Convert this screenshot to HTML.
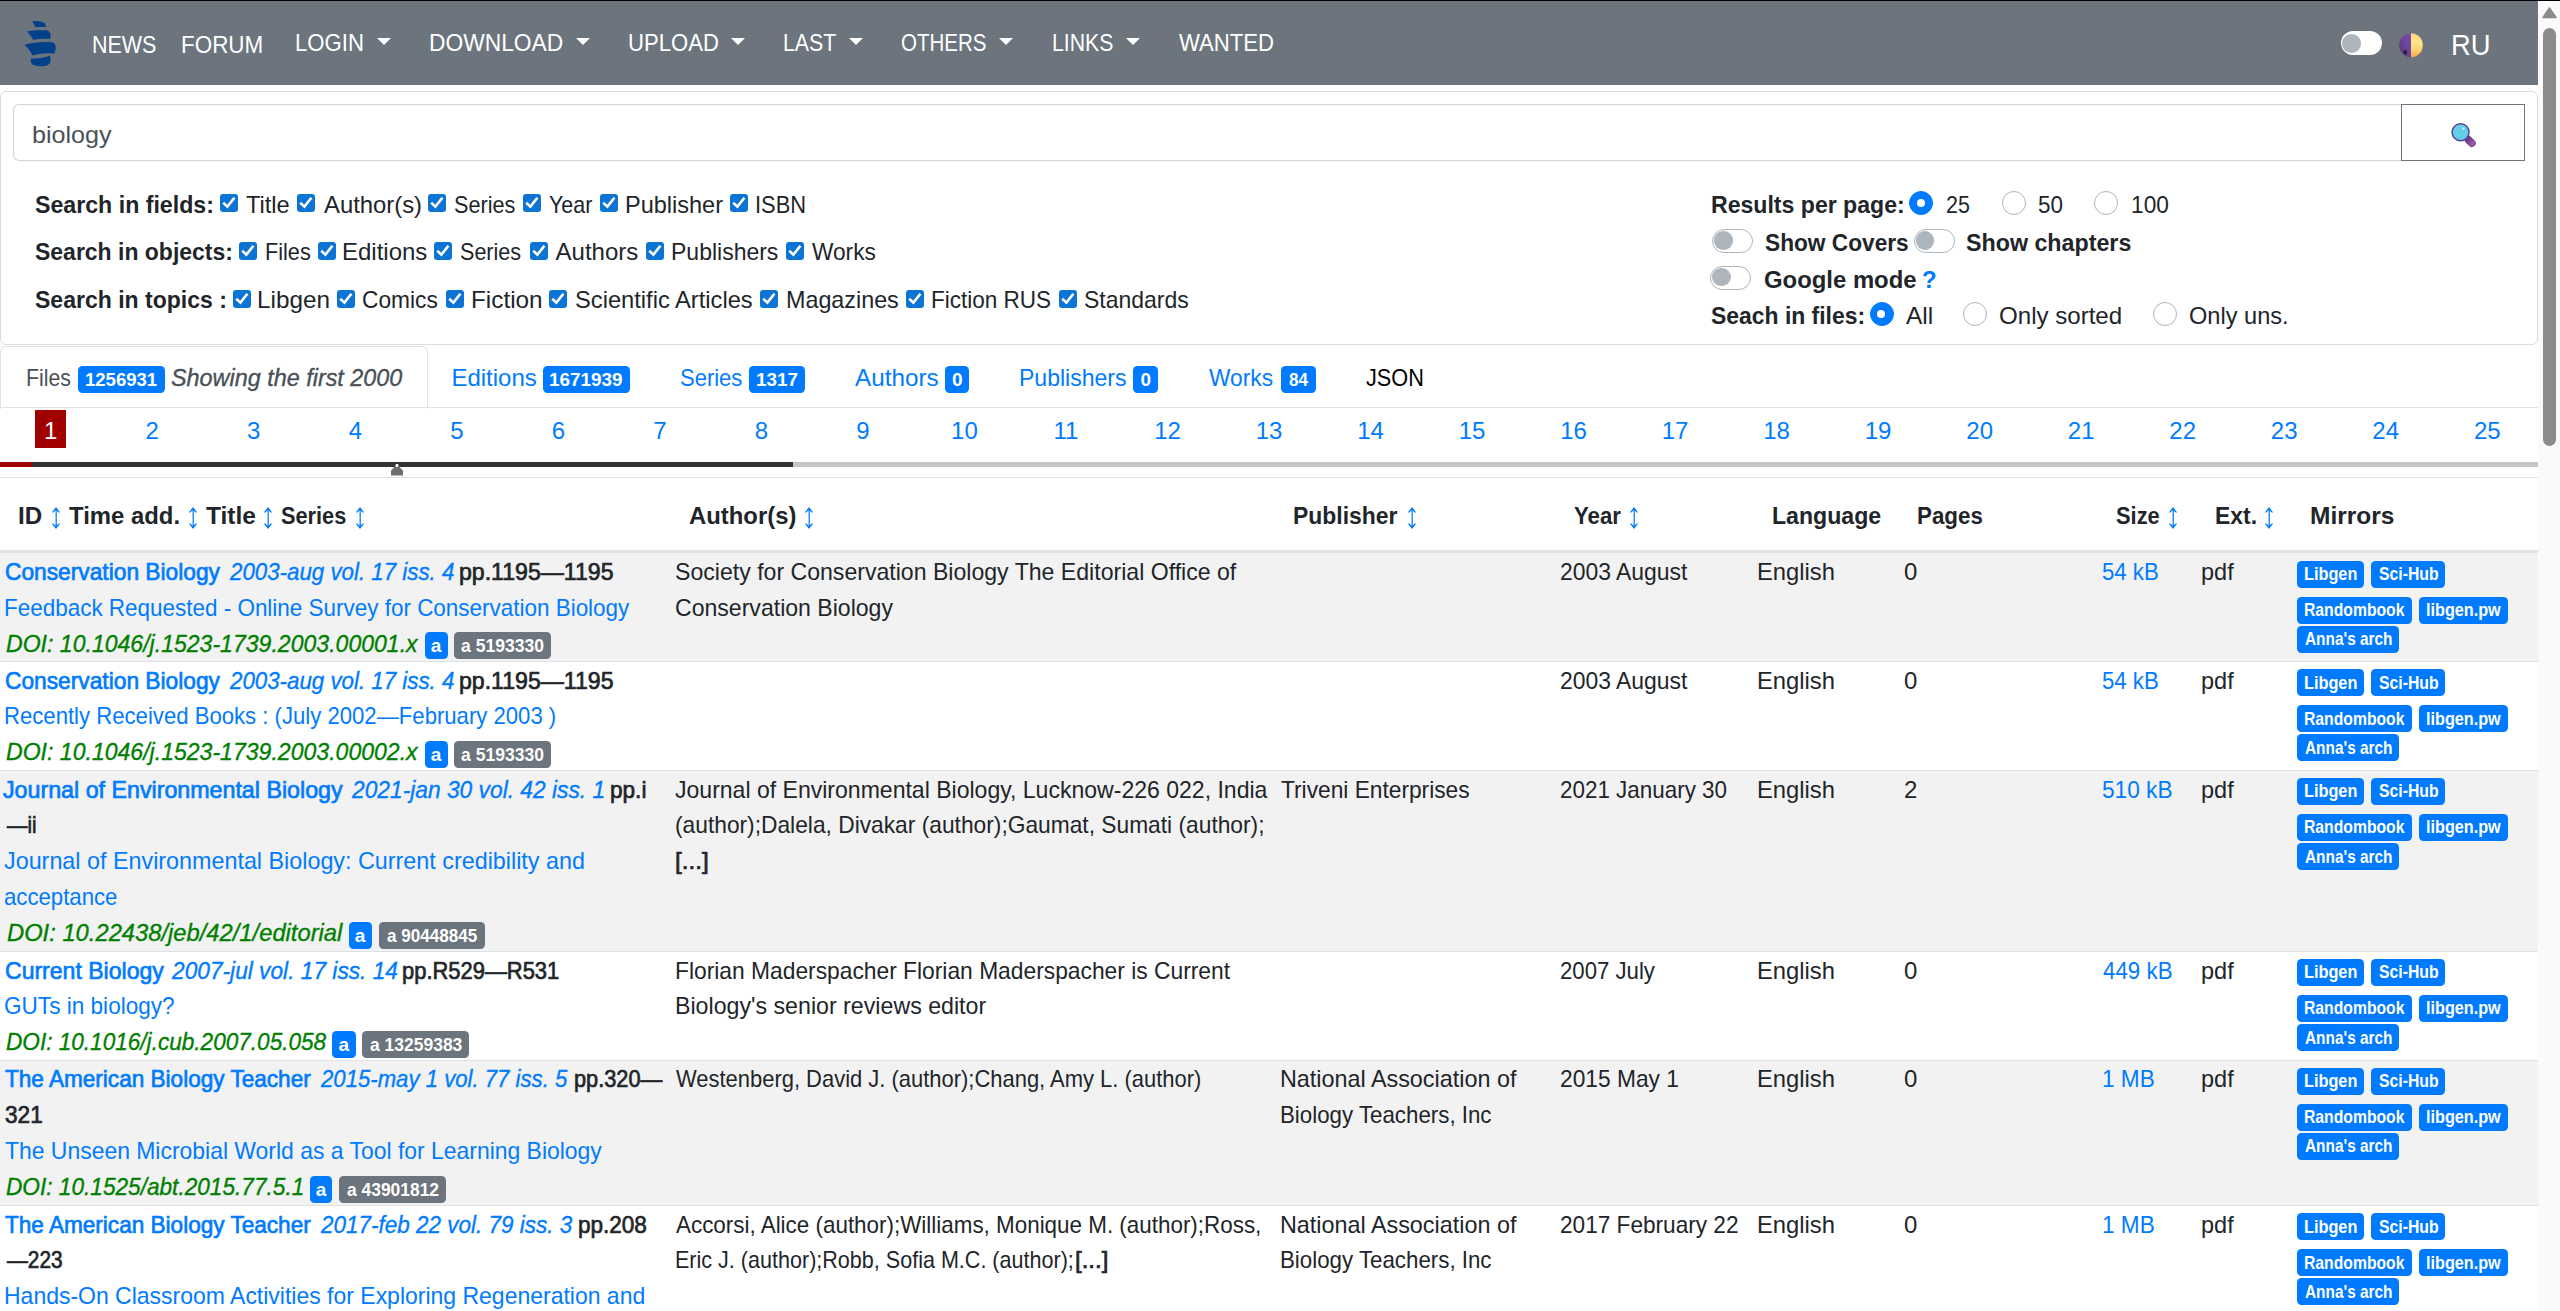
<!DOCTYPE html>
<html><head><meta charset="utf-8"><title>Library Genesis</title>
<style>
html,body{margin:0;padding:0;width:2560px;height:1311px;overflow:hidden;background:#fff;}
body{position:relative;font-family:"Liberation Sans",sans-serif;color:#212529;}
.t{position:absolute;white-space:pre;transform-origin:0 0;}
.bd{position:absolute;border-radius:4.5px;color:#fff;font-weight:bold;}
.bd span{position:absolute;white-space:pre;transform-origin:0 0;}
.cb{position:absolute;width:18px;height:18px;background:#0b74d5;border-radius:3px;}
.cb svg{position:absolute;left:0;top:0;}
.rd{position:absolute;width:24px;height:24px;box-sizing:border-box;border-radius:50%;border:1.5px solid #adb5bd;background:#fff;}
.rd.on{background:#007bff;border-color:#007bff;}
.rd.on::after{content:"";position:absolute;left:6.5px;top:6.5px;width:8px;height:8px;border-radius:50%;background:#fff;}
.sw{position:absolute;width:41.2px;height:23.5px;box-sizing:border-box;border:1.5px solid #adb5bd;border-radius:12px;background:#fff;}
.sw i{position:absolute;left:1.2px;top:1.3px;width:18.2px;height:18.2px;border-radius:50%;background:#adb5bd;}
.ar{position:absolute;}
.pg{position:absolute;top:419px;height:24px;font-size:24px;line-height:24px;text-align:center;}
.caret{position:absolute;top:37.5px;width:0;height:0;border-top:7.5px solid #fff;border-left:7px solid transparent;border-right:7px solid transparent;}
.row{position:absolute;left:0;width:2538px;}
.rline{position:absolute;left:0;width:2538px;height:1px;background:#dee2e6;}
</style></head><body>
<div style="position:absolute;left:0;top:0;width:2560px;height:1px;background:#000"></div>
<!-- navbar -->
<div style="position:absolute;left:0;top:1px;width:2538px;height:83.5px;background:#6c757d"></div>
<svg style="position:absolute;left:22px;top:18px" width="38" height="52" viewBox="22 18 38 52">
<g fill="#02408a">
<path d="M32.3 21.0 C37.5 20.8 42.5 21.6 44.6 23.0 C45.3 24.2 45.8 25.7 46.0 27.1 C42.3 26.9 38.5 26.9 35.2 27.3 C34.3 25.0 33.4 22.9 32.3 21.0Z"/>
<path d="M27.0 31.6 C33.5 30.1 41.0 29.9 47.5 30.6 C50.6 31.8 51.4 35.5 50.2 38.9 C44.5 38.6 38.6 38.9 33.1 39.8 C31.6 37.0 29.5 34.0 27.0 31.6Z"/>
<path d="M24.5 45.0 C32.5 42.3 43.0 41.7 52.7 42.3 C56.3 43.5 56.6 49.0 54.2 53.7 C47.5 52.8 40.0 53.3 32.6 55.6 C30.7 51.8 28.0 47.9 24.5 45.0Z"/>
<path d="M49.8 55.4 C51.4 59.5 50.8 63.7 47.0 65.5 C42.6 66.7 36.5 66.5 32.4 64.5 C30.5 62.6 30.5 60.2 31.2 58.5 C37.5 58.5 44.5 57.8 49.8 55.4Z"/>
</g></svg>
<!-- navbar toggle -->
<div style="position:absolute;left:2340.5px;top:31.3px;width:41px;height:23.6px;border-radius:12px;background:#fff"></div>
<div style="position:absolute;left:2342.4px;top:34px;width:18.6px;height:18.6px;border-radius:50%;background:#adb5bd"></div>
<!-- moon -->
<svg style="position:absolute;left:2399px;top:32.8px" width="25" height="25" viewBox="0 0 25 25">
<defs><linearGradient id="yl" x1="0" y1="0" x2="0" y2="1"><stop offset="0" stop-color="#ffd86e"/><stop offset="0.35" stop-color="#ffe58c"/><stop offset="0.7" stop-color="#fdd070"/><stop offset="1" stop-color="#f8a050"/></linearGradient>
<linearGradient id="pp" x1="1" y1="0" x2="0" y2="1"><stop offset="0" stop-color="#7a4cae"/><stop offset="0.5" stop-color="#6a4596"/><stop offset="1" stop-color="#4a3268"/></linearGradient></defs>
<path d="M12 0.2 A11.8 12 0 0 0 12 24.2Z" fill="url(#pp)"/>
<path d="M12 0.2 A11.8 12 0 0 1 12 24.2Z" fill="url(#yl)"/>
<ellipse cx="6.3" cy="19.3" rx="1.8" ry="2.2" fill="#2a1a3a"/>
</svg>
<!-- search card -->
<div style="position:absolute;left:0;top:91px;width:2537.5px;height:254px;box-sizing:border-box;border:1px solid #dcdcdc;border-radius:6px"></div>
<div style="position:absolute;left:13px;top:104px;width:2388.5px;height:56.5px;box-sizing:border-box;border:1.5px solid #ced4da;border-right:none;border-radius:6px 0 0 6px"></div>
<div style="position:absolute;left:2401px;top:104px;width:124px;height:56.5px;box-sizing:border-box;border:1.5px solid #6c757d"></div>
<svg style="position:absolute;left:2450px;top:122px" width="26" height="26" viewBox="0 0 26 26">
<defs><linearGradient id="hd" x1="0" y1="0" x2="1" y2="1"><stop offset="0" stop-color="#6e3c8c"/><stop offset="1" stop-color="#9a5aa6"/></linearGradient></defs>
<path d="M18.4 17.8 L21.9 21.2" stroke="#6a3a8a" stroke-width="7.6" stroke-linecap="round"/><path d="M18.4 17.8 L21.9 21.2" stroke="url(#hd)" stroke-width="6" stroke-linecap="round"/>
<circle cx="10.6" cy="10.2" r="8.5" fill="#62cfea" stroke="#5a3f8e" stroke-width="1.4"/>
<circle cx="13.4" cy="6.6" r="1.2" fill="#d8f2ff"/>
</svg>
<!-- tabs -->
<div style="position:absolute;left:0;top:346px;width:428px;height:62.5px;box-sizing:border-box;border:1.5px solid #dee2e6;border-bottom:none;border-radius:6px 6px 0 0;background:#fff"></div>
<div style="position:absolute;left:0;top:407px;width:2538px;height:1px;background:#dee2e6"></div>
<!-- pagination -->
<div style="position:absolute;left:35px;top:410px;width:31px;height:38px;background:#a00000"></div>
<div style="position:absolute;left:0;top:462px;width:32px;height:5px;background:#a00000"></div>
<div style="position:absolute;left:32px;top:462px;width:761px;height:5px;background:#333"></div>
<div style="position:absolute;left:793px;top:462px;width:1745px;height:5px;background:#c6c6c6"></div>
<svg style="position:absolute;left:390px;top:463px" width="14" height="13" viewBox="0 0 14 13"><path d="M1 12.5 V7.5 L7 1.5 L13 7.5 V12.5Z" fill="#6e6e6e"/><circle cx="7" cy="2.4" r="1.6" fill="#fff"/></svg>
<div style="position:absolute;left:0;top:477px;width:2538px;height:1.2px;background:#dee2e6"></div>
<!-- header border -->
<div style="position:absolute;left:0;top:550px;width:2538px;height:3px;background:#dee2e6"></div>
<div class="cb" style="left:220px;top:194px"><svg width="18" height="18" viewBox="0 0 18 18"><path d="M4.2 9.6 L7.4 12.6 L13.6 4.8" fill="none" stroke="#fff" stroke-width="2.6" stroke-linecap="square"/></svg></div><div class="cb" style="left:297px;top:194px"><svg width="18" height="18" viewBox="0 0 18 18"><path d="M4.2 9.6 L7.4 12.6 L13.6 4.8" fill="none" stroke="#fff" stroke-width="2.6" stroke-linecap="square"/></svg></div><div class="cb" style="left:428px;top:194px"><svg width="18" height="18" viewBox="0 0 18 18"><path d="M4.2 9.6 L7.4 12.6 L13.6 4.8" fill="none" stroke="#fff" stroke-width="2.6" stroke-linecap="square"/></svg></div><div class="cb" style="left:522.6px;top:194px"><svg width="18" height="18" viewBox="0 0 18 18"><path d="M4.2 9.6 L7.4 12.6 L13.6 4.8" fill="none" stroke="#fff" stroke-width="2.6" stroke-linecap="square"/></svg></div><div class="cb" style="left:600px;top:194px"><svg width="18" height="18" viewBox="0 0 18 18"><path d="M4.2 9.6 L7.4 12.6 L13.6 4.8" fill="none" stroke="#fff" stroke-width="2.6" stroke-linecap="square"/></svg></div><div class="cb" style="left:730px;top:194px"><svg width="18" height="18" viewBox="0 0 18 18"><path d="M4.2 9.6 L7.4 12.6 L13.6 4.8" fill="none" stroke="#fff" stroke-width="2.6" stroke-linecap="square"/></svg></div><div class="cb" style="left:239.2px;top:242px"><svg width="18" height="18" viewBox="0 0 18 18"><path d="M4.2 9.6 L7.4 12.6 L13.6 4.8" fill="none" stroke="#fff" stroke-width="2.6" stroke-linecap="square"/></svg></div><div class="cb" style="left:318px;top:242px"><svg width="18" height="18" viewBox="0 0 18 18"><path d="M4.2 9.6 L7.4 12.6 L13.6 4.8" fill="none" stroke="#fff" stroke-width="2.6" stroke-linecap="square"/></svg></div><div class="cb" style="left:434.2px;top:242px"><svg width="18" height="18" viewBox="0 0 18 18"><path d="M4.2 9.6 L7.4 12.6 L13.6 4.8" fill="none" stroke="#fff" stroke-width="2.6" stroke-linecap="square"/></svg></div><div class="cb" style="left:529.5px;top:242px"><svg width="18" height="18" viewBox="0 0 18 18"><path d="M4.2 9.6 L7.4 12.6 L13.6 4.8" fill="none" stroke="#fff" stroke-width="2.6" stroke-linecap="square"/></svg></div><div class="cb" style="left:645.6px;top:242px"><svg width="18" height="18" viewBox="0 0 18 18"><path d="M4.2 9.6 L7.4 12.6 L13.6 4.8" fill="none" stroke="#fff" stroke-width="2.6" stroke-linecap="square"/></svg></div><div class="cb" style="left:786px;top:242px"><svg width="18" height="18" viewBox="0 0 18 18"><path d="M4.2 9.6 L7.4 12.6 L13.6 4.8" fill="none" stroke="#fff" stroke-width="2.6" stroke-linecap="square"/></svg></div><div class="cb" style="left:233px;top:290px"><svg width="18" height="18" viewBox="0 0 18 18"><path d="M4.2 9.6 L7.4 12.6 L13.6 4.8" fill="none" stroke="#fff" stroke-width="2.6" stroke-linecap="square"/></svg></div><div class="cb" style="left:337.2px;top:290px"><svg width="18" height="18" viewBox="0 0 18 18"><path d="M4.2 9.6 L7.4 12.6 L13.6 4.8" fill="none" stroke="#fff" stroke-width="2.6" stroke-linecap="square"/></svg></div><div class="cb" style="left:446.2px;top:290px"><svg width="18" height="18" viewBox="0 0 18 18"><path d="M4.2 9.6 L7.4 12.6 L13.6 4.8" fill="none" stroke="#fff" stroke-width="2.6" stroke-linecap="square"/></svg></div><div class="cb" style="left:549.3px;top:290px"><svg width="18" height="18" viewBox="0 0 18 18"><path d="M4.2 9.6 L7.4 12.6 L13.6 4.8" fill="none" stroke="#fff" stroke-width="2.6" stroke-linecap="square"/></svg></div><div class="cb" style="left:760.1px;top:290px"><svg width="18" height="18" viewBox="0 0 18 18"><path d="M4.2 9.6 L7.4 12.6 L13.6 4.8" fill="none" stroke="#fff" stroke-width="2.6" stroke-linecap="square"/></svg></div><div class="cb" style="left:906.1px;top:290px"><svg width="18" height="18" viewBox="0 0 18 18"><path d="M4.2 9.6 L7.4 12.6 L13.6 4.8" fill="none" stroke="#fff" stroke-width="2.6" stroke-linecap="square"/></svg></div><div class="cb" style="left:1059px;top:290px"><svg width="18" height="18" viewBox="0 0 18 18"><path d="M4.2 9.6 L7.4 12.6 L13.6 4.8" fill="none" stroke="#fff" stroke-width="2.6" stroke-linecap="square"/></svg></div><div class="rd on" style="left:1909px;top:191px"></div><div class="rd" style="left:2001.8px;top:191px"></div><div class="rd" style="left:2093.8px;top:191px"></div><div class="rd on" style="left:1869.8px;top:302px"></div><div class="rd" style="left:1963px;top:302px"></div><div class="rd" style="left:2152.9px;top:302px"></div><div class="sw" style="left:1712.3px;top:229.2px"><i></i></div><div class="sw" style="left:1913.5px;top:229.2px"><i></i></div><div class="sw" style="left:1710.3px;top:266px"><i></i></div><svg class="ar" style="left:51.3px;top:506px" width="10" height="24" viewBox="0 0 10 24"><path d="M5.2 2 V22" stroke="#007bff" stroke-width="1.25"/><path d="M1 6.2 L5 1 L9 6.2 L8 6.8 L5 4 L2 6.8Z M1 17.8 L5 23 L9 17.8 L8 17.2 L5 20 L2 17.2Z" fill="#007bff"/></svg><svg class="ar" style="left:187.8px;top:506px" width="10" height="24" viewBox="0 0 10 24"><path d="M5.2 2 V22" stroke="#007bff" stroke-width="1.25"/><path d="M1 6.2 L5 1 L9 6.2 L8 6.8 L5 4 L2 6.8Z M1 17.8 L5 23 L9 17.8 L8 17.2 L5 20 L2 17.2Z" fill="#007bff"/></svg><svg class="ar" style="left:263px;top:506px" width="10" height="24" viewBox="0 0 10 24"><path d="M5.2 2 V22" stroke="#007bff" stroke-width="1.25"/><path d="M1 6.2 L5 1 L9 6.2 L8 6.8 L5 4 L2 6.8Z M1 17.8 L5 23 L9 17.8 L8 17.2 L5 20 L2 17.2Z" fill="#007bff"/></svg><svg class="ar" style="left:355px;top:506px" width="10" height="24" viewBox="0 0 10 24"><path d="M5.2 2 V22" stroke="#007bff" stroke-width="1.25"/><path d="M1 6.2 L5 1 L9 6.2 L8 6.8 L5 4 L2 6.8Z M1 17.8 L5 23 L9 17.8 L8 17.2 L5 20 L2 17.2Z" fill="#007bff"/></svg><svg class="ar" style="left:804.2px;top:506px" width="10" height="24" viewBox="0 0 10 24"><path d="M5.2 2 V22" stroke="#007bff" stroke-width="1.25"/><path d="M1 6.2 L5 1 L9 6.2 L8 6.8 L5 4 L2 6.8Z M1 17.8 L5 23 L9 17.8 L8 17.2 L5 20 L2 17.2Z" fill="#007bff"/></svg><svg class="ar" style="left:1406.5px;top:506px" width="10" height="24" viewBox="0 0 10 24"><path d="M5.2 2 V22" stroke="#007bff" stroke-width="1.25"/><path d="M1 6.2 L5 1 L9 6.2 L8 6.8 L5 4 L2 6.8Z M1 17.8 L5 23 L9 17.8 L8 17.2 L5 20 L2 17.2Z" fill="#007bff"/></svg><svg class="ar" style="left:1629.2px;top:506px" width="10" height="24" viewBox="0 0 10 24"><path d="M5.2 2 V22" stroke="#007bff" stroke-width="1.25"/><path d="M1 6.2 L5 1 L9 6.2 L8 6.8 L5 4 L2 6.8Z M1 17.8 L5 23 L9 17.8 L8 17.2 L5 20 L2 17.2Z" fill="#007bff"/></svg><svg class="ar" style="left:2167.5px;top:506px" width="10" height="24" viewBox="0 0 10 24"><path d="M5.2 2 V22" stroke="#007bff" stroke-width="1.25"/><path d="M1 6.2 L5 1 L9 6.2 L8 6.8 L5 4 L2 6.8Z M1 17.8 L5 23 L9 17.8 L8 17.2 L5 20 L2 17.2Z" fill="#007bff"/></svg><svg class="ar" style="left:2264px;top:506px" width="10" height="24" viewBox="0 0 10 24"><path d="M5.2 2 V22" stroke="#007bff" stroke-width="1.25"/><path d="M1 6.2 L5 1 L9 6.2 L8 6.8 L5 4 L2 6.8Z M1 17.8 L5 23 L9 17.8 L8 17.2 L5 20 L2 17.2Z" fill="#007bff"/></svg><div class="pg" style="left:0.00px;width:101.52px;color:#fff">1</div><div class="pg" style="left:101.52px;width:101.52px;color:#007bff">2</div><div class="pg" style="left:203.04px;width:101.52px;color:#007bff">3</div><div class="pg" style="left:304.56px;width:101.52px;color:#007bff">4</div><div class="pg" style="left:406.08px;width:101.52px;color:#007bff">5</div><div class="pg" style="left:507.60px;width:101.52px;color:#007bff">6</div><div class="pg" style="left:609.12px;width:101.52px;color:#007bff">7</div><div class="pg" style="left:710.64px;width:101.52px;color:#007bff">8</div><div class="pg" style="left:812.16px;width:101.52px;color:#007bff">9</div><div class="pg" style="left:913.68px;width:101.52px;color:#007bff">10</div><div class="pg" style="left:1015.20px;width:101.52px;color:#007bff">11</div><div class="pg" style="left:1116.72px;width:101.52px;color:#007bff">12</div><div class="pg" style="left:1218.24px;width:101.52px;color:#007bff">13</div><div class="pg" style="left:1319.76px;width:101.52px;color:#007bff">14</div><div class="pg" style="left:1421.28px;width:101.52px;color:#007bff">15</div><div class="pg" style="left:1522.80px;width:101.52px;color:#007bff">16</div><div class="pg" style="left:1624.32px;width:101.52px;color:#007bff">17</div><div class="pg" style="left:1725.84px;width:101.52px;color:#007bff">18</div><div class="pg" style="left:1827.36px;width:101.52px;color:#007bff">19</div><div class="pg" style="left:1928.88px;width:101.52px;color:#007bff">20</div><div class="pg" style="left:2030.40px;width:101.52px;color:#007bff">21</div><div class="pg" style="left:2131.92px;width:101.52px;color:#007bff">22</div><div class="pg" style="left:2233.44px;width:101.52px;color:#007bff">23</div><div class="pg" style="left:2334.96px;width:101.52px;color:#007bff">24</div><div class="pg" style="left:2436.48px;width:101.52px;color:#007bff">25</div><div class="caret" style="left:377px"></div><div class="caret" style="left:576.4px"></div><div class="caret" style="left:731px"></div><div class="caret" style="left:849px"></div><div class="caret" style="left:999px"></div><div class="caret" style="left:1126px"></div><div class="row" style="top:553px;height:108.5px;background:#f2f2f2"></div><div class="row" style="top:661.5px;height:108.79999999999995px;background:#fff"></div><div class="rline" style="top:661px"></div><div class="row" style="top:770.3px;height:181.10000000000002px;background:#f2f2f2"></div><div class="rline" style="top:770px"></div><div class="row" style="top:951.4px;height:108.80000000000007px;background:#fff"></div><div class="rline" style="top:951px"></div><div class="row" style="top:1060.2px;height:145.29999999999995px;background:#f2f2f2"></div><div class="rline" style="top:1060px"></div><div class="row" style="top:1205.5px;height:105.5px;background:#fff"></div><div class="rline" style="top:1205px"></div>
<div class="t" style="left:92.41px;top:33px;font-size:24px;line-height:24px;color:#ffffff;transform:scaleX(0.8945)">NEWS</div>
<div class="t" style="left:181.37px;top:33px;font-size:24px;line-height:24px;color:#ffffff;transform:scaleX(0.9350)">FORUM</div>
<div class="t" style="left:294.68px;top:31px;font-size:24px;line-height:24px;color:#ffffff;transform:scaleX(0.9233)">LOGIN</div>
<div class="t" style="left:428.75px;top:31px;font-size:24px;line-height:24px;color:#ffffff;transform:scaleX(0.9499)">DOWNLOAD</div>
<div class="t" style="left:628.28px;top:31px;font-size:24px;line-height:24px;color:#ffffff;transform:scaleX(0.9203)">UPLOAD</div>
<div class="t" style="left:783.01px;top:31px;font-size:24px;line-height:24px;color:#ffffff;transform:scaleX(0.8863)">LAST</div>
<div class="t" style="left:900.74px;top:31px;font-size:24px;line-height:24px;color:#ffffff;transform:scaleX(0.8551)">OTHERS</div>
<div class="t" style="left:1051.92px;top:31px;font-size:24px;line-height:24px;color:#ffffff;transform:scaleX(0.8849)">LINKS</div>
<div class="t" style="left:1179.40px;top:31px;font-size:24px;line-height:24px;color:#ffffff;transform:scaleX(0.9225)">WANTED</div>
<div class="t" style="left:2451.17px;top:30px;font-size:30px;line-height:30px;color:#ffffff;transform:scaleX(0.9129)">RU</div>
<div class="t" style="left:31.75px;top:123px;font-size:24px;line-height:24px;color:#495057;transform:scaleX(1.0472)">biology</div>
<div class="t" style="left:34.99px;top:193px;font-size:24px;line-height:24px;color:#212529;font-weight:bold;transform:scaleX(0.9651)">Search in fields:</div>
<div class="t" style="left:246.30px;top:193px;font-size:24px;line-height:24px;color:#212529;transform:scaleX(0.9844)">Title</div>
<div class="t" style="left:323.80px;top:193px;font-size:24px;line-height:24px;color:#212529;transform:scaleX(0.9928)">Author(s)</div>
<div class="t" style="left:453.60px;top:193px;font-size:24px;line-height:24px;color:#212529;transform:scaleX(0.9012)">Series</div>
<div class="t" style="left:548.50px;top:193px;font-size:24px;line-height:24px;color:#212529;transform:scaleX(0.8949)">Year</div>
<div class="t" style="left:624.51px;top:193px;font-size:24px;line-height:24px;color:#212529;transform:scaleX(0.9793)">Publisher</div>
<div class="t" style="left:754.98px;top:193px;font-size:24px;line-height:24px;color:#212529;transform:scaleX(0.9112)">ISBN</div>
<div class="t" style="left:34.99px;top:240px;font-size:24px;line-height:24px;color:#212529;font-weight:bold;transform:scaleX(0.9573)">Search in objects:</div>
<div class="t" style="left:264.50px;top:240px;font-size:24px;line-height:24px;color:#212529;transform:scaleX(0.9019)">Files</div>
<div class="t" style="left:341.98px;top:240px;font-size:24px;line-height:24px;color:#212529">Editions</div>
<div class="t" style="left:460.00px;top:240px;font-size:24px;line-height:24px;color:#212529;transform:scaleX(0.8981)">Series</div>
<div class="t" style="left:555.60px;top:240px;font-size:24px;line-height:24px;color:#212529">Authors</div>
<div class="t" style="left:670.74px;top:240px;font-size:24px;line-height:24px;color:#212529;transform:scaleX(0.9581)">Publishers</div>
<div class="t" style="left:812.20px;top:240px;font-size:24px;line-height:24px;color:#212529;transform:scaleX(0.9444)">Works</div>
<div class="t" style="left:34.99px;top:288px;font-size:24px;line-height:24px;color:#212529;font-weight:bold;transform:scaleX(0.9593)">Search in topics :</div>
<div class="t" style="left:257.47px;top:288px;font-size:24px;line-height:24px;color:#212529;transform:scaleX(1.0129)">Libgen</div>
<div class="t" style="left:362.15px;top:288px;font-size:24px;line-height:24px;color:#212529;transform:scaleX(0.9468)">Comics</div>
<div class="t" style="left:470.77px;top:288px;font-size:24px;line-height:24px;color:#212529;transform:scaleX(1.0129)">Fiction</div>
<div class="t" style="left:574.71px;top:288px;font-size:24px;line-height:24px;color:#212529;transform:scaleX(0.9869)">Scientific Articles</div>
<div class="t" style="left:785.83px;top:288px;font-size:24px;line-height:24px;color:#212529;transform:scaleX(0.9717)">Magazines</div>
<div class="t" style="left:931.06px;top:288px;font-size:24px;line-height:24px;color:#212529;transform:scaleX(0.9380)">Fiction RUS</div>
<div class="t" style="left:1084.14px;top:288px;font-size:24px;line-height:24px;color:#212529;transform:scaleX(0.9575)">Standards</div>
<div class="t" style="left:1710.64px;top:193px;font-size:24px;line-height:24px;color:#212529;font-weight:bold;transform:scaleX(0.9617)">Results per page:</div>
<div class="t" style="left:1945.61px;top:193px;font-size:24px;line-height:24px;color:#212529;transform:scaleX(0.8917)">25</div>
<div class="t" style="left:2037.97px;top:193px;font-size:24px;line-height:24px;color:#212529;transform:scaleX(0.9347)">50</div>
<div class="t" style="left:2130.95px;top:193px;font-size:24px;line-height:24px;color:#212529;transform:scaleX(0.9459)">100</div>
<div class="t" style="left:1765.20px;top:231px;font-size:24px;line-height:24px;color:#212529;font-weight:bold;transform:scaleX(0.9454)">Show Covers</div>
<div class="t" style="left:1966.29px;top:231px;font-size:24px;line-height:24px;color:#212529;font-weight:bold;transform:scaleX(0.9686)">Show chapters</div>
<div class="t" style="left:1763.89px;top:268px;font-size:24px;line-height:24px;color:#212529;font-weight:bold;transform:scaleX(0.9949)">Google mode</div>
<div class="t" style="left:1922.00px;top:268px;font-size:24px;line-height:24px;color:#007bff;font-weight:bold">?</div>
<div class="t" style="left:1710.59px;top:304px;font-size:24px;line-height:24px;color:#212529;font-weight:bold;transform:scaleX(0.9549)">Seach in files:</div>
<div class="t" style="left:1905.80px;top:304px;font-size:24px;line-height:24px;color:#212529;transform:scaleX(1.0182)">All</div>
<div class="t" style="left:1999.30px;top:304px;font-size:24px;line-height:24px;color:#212529;transform:scaleX(1.0036)">Only sorted</div>
<div class="t" style="left:2188.72px;top:304px;font-size:24px;line-height:24px;color:#212529;transform:scaleX(0.9827)">Only uns.</div>
<div class="t" style="left:25.61px;top:366px;font-size:24px;line-height:24px;color:#495057;transform:scaleX(0.8858)">Files</div>
<div class="t" style="left:171.00px;top:366px;font-size:24px;line-height:24px;color:#495057;font-style:italic;-webkit-text-stroke:0.35px #495057;transform:scaleX(0.9743)">Showing the first 2000</div>
<div class="t" style="left:451.38px;top:366px;font-size:24px;line-height:24px;color:#007bff">Editions</div>
<div class="t" style="left:679.68px;top:366px;font-size:24px;line-height:24px;color:#007bff;transform:scaleX(0.9162)">Series</div>
<div class="t" style="left:854.70px;top:366px;font-size:24px;line-height:24px;color:#007bff;transform:scaleX(1.0108)">Authors</div>
<div class="t" style="left:1019.34px;top:366px;font-size:24px;line-height:24px;color:#007bff;transform:scaleX(0.9599)">Publishers</div>
<div class="t" style="left:1209.40px;top:366px;font-size:24px;line-height:24px;color:#007bff;transform:scaleX(0.9473)">Works</div>
<div class="t" style="left:1365.60px;top:366px;font-size:24px;line-height:24px;color:#000000;transform:scaleX(0.9031)">JSON</div>
<div class="t" style="left:18.29px;top:504px;font-size:24px;line-height:24px;color:#212529;font-weight:bold;transform:scaleX(1.0058)">ID</div>
<div class="t" style="left:68.60px;top:504px;font-size:24px;line-height:24px;color:#212529;font-weight:bold;transform:scaleX(0.9953)">Time add.</div>
<div class="t" style="left:205.70px;top:504px;font-size:24px;line-height:24px;color:#212529;font-weight:bold;transform:scaleX(1.0216)">Title</div>
<div class="t" style="left:281.30px;top:504px;font-size:24px;line-height:24px;color:#212529;font-weight:bold;transform:scaleX(0.9064)">Series</div>
<div class="t" style="left:689.20px;top:504px;font-size:24px;line-height:24px;color:#212529;font-weight:bold;transform:scaleX(0.9945)">Author(s)</div>
<div class="t" style="left:1293.14px;top:504px;font-size:24px;line-height:24px;color:#212529;font-weight:bold;transform:scaleX(0.9555)">Publisher</div>
<div class="t" style="left:1574.20px;top:504px;font-size:24px;line-height:24px;color:#212529;font-weight:bold;transform:scaleX(0.9250)">Year</div>
<div class="t" style="left:1771.84px;top:504px;font-size:24px;line-height:24px;color:#212529;font-weight:bold;transform:scaleX(0.9625)">Language</div>
<div class="t" style="left:1917.47px;top:504px;font-size:24px;line-height:24px;color:#212529;font-weight:bold;transform:scaleX(0.9313)">Pages</div>
<div class="t" style="left:2115.50px;top:504px;font-size:24px;line-height:24px;color:#212529;font-weight:bold;transform:scaleX(0.9103)">Size</div>
<div class="t" style="left:2214.55px;top:504px;font-size:24px;line-height:24px;color:#212529;font-weight:bold;transform:scaleX(0.9543)">Ext.</div>
<div class="t" style="left:2310.48px;top:504px;font-size:24px;line-height:24px;color:#212529;font-weight:bold;transform:scaleX(1.0204)">Mirrors</div>
<div class="t" style="left:5.35px;top:560px;font-size:24px;line-height:24px;color:#007bff;-webkit-text-stroke:0.7px #007bff;transform:scaleX(0.9478)">Conservation Biology</div>
<div class="t" style="left:229.53px;top:560px;font-size:24px;line-height:24px;color:#007bff;font-style:italic;-webkit-text-stroke:0.35px #007bff;transform:scaleX(0.9292)">2003-aug vol. 17 iss. 4</div>
<div class="t" style="left:459.04px;top:560px;font-size:24px;line-height:24px;color:#212529;-webkit-text-stroke:0.7px #212529;transform:scaleX(0.9621)">pp.1195—1195</div>
<div class="t" style="left:4.36px;top:596px;font-size:24px;line-height:24px;color:#007bff;transform:scaleX(0.9356)">Feedback Requested - Online Survey for Conservation Biology</div>
<div class="t" style="left:6.30px;top:632px;font-size:24px;line-height:24px;color:#008000;font-style:italic;-webkit-text-stroke:0.35px #008000;transform:scaleX(0.9610)">DOI: 10.1046/j.1523-1739.2003.00001.x</div>
<div class="t" style="left:675.04px;top:560px;font-size:24px;line-height:24px;color:#212529;transform:scaleX(0.9620)">Society for Conservation Biology The Editorial Office of</div>
<div class="t" style="left:675.04px;top:596px;font-size:24px;line-height:24px;color:#212529;transform:scaleX(0.9611)">Conservation Biology</div>
<div class="t" style="left:5.35px;top:669px;font-size:24px;line-height:24px;color:#007bff;-webkit-text-stroke:0.7px #007bff;transform:scaleX(0.9478)">Conservation Biology</div>
<div class="t" style="left:229.53px;top:669px;font-size:24px;line-height:24px;color:#007bff;font-style:italic;-webkit-text-stroke:0.35px #007bff;transform:scaleX(0.9292)">2003-aug vol. 17 iss. 4</div>
<div class="t" style="left:459.04px;top:669px;font-size:24px;line-height:24px;color:#212529;-webkit-text-stroke:0.7px #212529;transform:scaleX(0.9621)">pp.1195—1195</div>
<div class="t" style="left:4.38px;top:704px;font-size:24px;line-height:24px;color:#007bff;transform:scaleX(0.9220)">Recently Received Books : (July 2002—February 2003 )</div>
<div class="t" style="left:6.30px;top:740px;font-size:24px;line-height:24px;color:#008000;font-style:italic;-webkit-text-stroke:0.35px #008000;transform:scaleX(0.9610)">DOI: 10.1046/j.1523-1739.2003.00002.x</div>
<div class="t" style="left:3.20px;top:778px;font-size:24px;line-height:24px;color:#007bff;-webkit-text-stroke:0.7px #007bff;transform:scaleX(0.9679)">Journal of Environmental Biology</div>
<div class="t" style="left:351.55px;top:778px;font-size:24px;line-height:24px;color:#007bff;font-style:italic;-webkit-text-stroke:0.35px #007bff;transform:scaleX(0.9486)">2021-jan 30 vol. 42 iss. 1</div>
<div class="t" style="left:609.96px;top:778px;font-size:24px;line-height:24px;color:#212529;-webkit-text-stroke:0.7px #212529;transform:scaleX(0.9411)">pp.i</div>
<div class="t" style="left:6.74px;top:813px;font-size:24px;line-height:24px;color:#212529;-webkit-text-stroke:0.7px #212529;transform:scaleX(0.8494)">—ii</div>
<div class="t" style="left:4.00px;top:849px;font-size:24px;line-height:24px;color:#007bff;transform:scaleX(0.9720)">Journal of Environmental Biology: Current credibility and</div>
<div class="t" style="left:4.38px;top:885px;font-size:24px;line-height:24px;color:#007bff;transform:scaleX(0.9242)">acceptance</div>
<div class="t" style="left:6.60px;top:921px;font-size:24px;line-height:24px;color:#008000;font-style:italic;-webkit-text-stroke:0.35px #008000;transform:scaleX(0.9895)">DOI: 10.22438/jeb/42/1/editorial</div>
<div class="t" style="left:675.00px;top:778px;font-size:24px;line-height:24px;color:#212529;transform:scaleX(0.9597)">Journal of Environmental Biology, Lucknow-226 022, India</div>
<div class="t" style="left:675.05px;top:813px;font-size:24px;line-height:24px;color:#212529;transform:scaleX(0.9484)">(author);Dalela, Divakar (author);Gaumat, Sumati (author);</div>
<div class="t" style="left:674.99px;top:849px;font-size:24px;line-height:24px;color:#212529;-webkit-text-stroke:0.7px #212529;transform:scaleX(1.0117)">[...]</div>
<div class="t" style="left:1281.00px;top:778px;font-size:24px;line-height:24px;color:#212529;transform:scaleX(0.9469)">Triveni Enterprises</div>
<div class="t" style="left:5.33px;top:959px;font-size:24px;line-height:24px;color:#007bff;-webkit-text-stroke:0.7px #007bff;transform:scaleX(0.9599)">Current Biology</div>
<div class="t" style="left:172.25px;top:959px;font-size:24px;line-height:24px;color:#007bff;font-style:italic;-webkit-text-stroke:0.35px #007bff;transform:scaleX(0.9463)">2007-jul vol. 17 iss. 14</div>
<div class="t" style="left:402.09px;top:959px;font-size:24px;line-height:24px;color:#212529;-webkit-text-stroke:0.7px #212529;transform:scaleX(0.9135)">pp.R529—R531</div>
<div class="t" style="left:4.36px;top:994px;font-size:24px;line-height:24px;color:#007bff;transform:scaleX(0.9407)">GUTs in biology?</div>
<div class="t" style="left:5.80px;top:1030px;font-size:24px;line-height:24px;color:#008000;font-style:italic;-webkit-text-stroke:0.35px #008000;transform:scaleX(0.9410)">DOI: 10.1016/j.cub.2007.05.058</div>
<div class="t" style="left:675.05px;top:959px;font-size:24px;line-height:24px;color:#212529;transform:scaleX(0.9500)">Florian Maderspacher Florian Maderspacher is Current</div>
<div class="t" style="left:675.03px;top:994px;font-size:24px;line-height:24px;color:#212529;transform:scaleX(0.9662)">Biology&#x27;s senior reviews editor</div>
<div class="t" style="left:5.30px;top:1067px;font-size:24px;line-height:24px;color:#007bff;-webkit-text-stroke:0.7px #007bff;transform:scaleX(0.9405)">The American Biology Teacher</div>
<div class="t" style="left:320.92px;top:1067px;font-size:24px;line-height:24px;color:#007bff;font-style:italic;-webkit-text-stroke:0.35px #007bff;transform:scaleX(0.9231)">2015-may 1 vol. 77 iss. 5</div>
<div class="t" style="left:574.09px;top:1067px;font-size:24px;line-height:24px;color:#212529;-webkit-text-stroke:0.7px #212529;transform:scaleX(0.9066)">pp.320—</div>
<div class="t" style="left:5.30px;top:1103px;font-size:24px;line-height:24px;color:#212529;-webkit-text-stroke:0.7px #212529;transform:scaleX(0.9422)">321</div>
<div class="t" style="left:5.30px;top:1139px;font-size:24px;line-height:24px;color:#007bff;transform:scaleX(0.9552)">The Unseen Microbial World as a Tool for Learning Biology</div>
<div class="t" style="left:5.80px;top:1175px;font-size:24px;line-height:24px;color:#008000;font-style:italic;-webkit-text-stroke:0.35px #008000;transform:scaleX(0.9432)">DOI: 10.1525/abt.2015.77.5.1</div>
<div class="t" style="left:676.30px;top:1067px;font-size:24px;line-height:24px;color:#212529;transform:scaleX(0.9144)">Westenberg, David J. (author);Chang, Amy L. (author)</div>
<div class="t" style="left:1280.03px;top:1067px;font-size:24px;line-height:24px;color:#212529;transform:scaleX(0.9735)">National Association of</div>
<div class="t" style="left:1280.07px;top:1103px;font-size:24px;line-height:24px;color:#212529;transform:scaleX(0.9290)">Biology Teachers, Inc</div>
<div class="t" style="left:5.30px;top:1213px;font-size:24px;line-height:24px;color:#007bff;-webkit-text-stroke:0.7px #007bff;transform:scaleX(0.9405)">The American Biology Teacher</div>
<div class="t" style="left:320.94px;top:1213px;font-size:24px;line-height:24px;color:#007bff;font-style:italic;-webkit-text-stroke:0.35px #007bff;transform:scaleX(0.9369)">2017-feb 22 vol. 79 iss. 3</div>
<div class="t" style="left:578.06px;top:1213px;font-size:24px;line-height:24px;color:#212529;-webkit-text-stroke:0.7px #212529;transform:scaleX(0.9382)">pp.208</div>
<div class="t" style="left:6.78px;top:1248px;font-size:24px;line-height:24px;color:#212529;-webkit-text-stroke:0.7px #212529;transform:scaleX(0.8672)">—223</div>
<div class="t" style="left:4.34px;top:1284px;font-size:24px;line-height:24px;color:#007bff;transform:scaleX(0.9575)">Hands-On Classroom Activities for Exploring Regeneration and</div>
<div class="t" style="left:676.30px;top:1213px;font-size:24px;line-height:24px;color:#212529;transform:scaleX(0.9338)">Accorsi, Alice (author);Williams, Monique M. (author);Ross,</div>
<div class="t" style="left:675.40px;top:1248px;font-size:24px;line-height:24px;color:#212529;transform:scaleX(0.8979)">Eric J. (author);Robb, Sofia M.C. (author);</div>
<div class="t" style="left:1075.00px;top:1248px;font-size:24px;line-height:24px;color:#212529;-webkit-text-stroke:0.7px #212529">[...]</div>
<div class="t" style="left:1280.03px;top:1213px;font-size:24px;line-height:24px;color:#212529;transform:scaleX(0.9735)">National Association of</div>
<div class="t" style="left:1280.07px;top:1248px;font-size:24px;line-height:24px;color:#212529;transform:scaleX(0.9290)">Biology Teachers, Inc</div>
<div class="t" style="left:1560.35px;top:560px;font-size:24px;line-height:24px;color:#212529;transform:scaleX(0.9545)">2003 August</div>
<div class="t" style="left:1756.89px;top:560px;font-size:24px;line-height:24px;color:#212529;transform:scaleX(0.9903)">English</div>
<div class="t" style="left:1903.90px;top:560px;font-size:24px;line-height:24px;color:#212529">0</div>
<div class="t" style="left:2101.79px;top:560px;font-size:24px;line-height:24px;color:#007bff;transform:scaleX(0.9245)">54 kB</div>
<div class="t" style="left:2200.92px;top:560px;font-size:24px;line-height:24px;color:#212529;transform:scaleX(0.9790)">pdf</div>
<div class="t" style="left:1560.35px;top:669px;font-size:24px;line-height:24px;color:#212529;transform:scaleX(0.9545)">2003 August</div>
<div class="t" style="left:1756.89px;top:669px;font-size:24px;line-height:24px;color:#212529;transform:scaleX(0.9903)">English</div>
<div class="t" style="left:1903.90px;top:669px;font-size:24px;line-height:24px;color:#212529">0</div>
<div class="t" style="left:2101.79px;top:669px;font-size:24px;line-height:24px;color:#007bff;transform:scaleX(0.9245)">54 kB</div>
<div class="t" style="left:2200.92px;top:669px;font-size:24px;line-height:24px;color:#212529;transform:scaleX(0.9790)">pdf</div>
<div class="t" style="left:1560.37px;top:778px;font-size:24px;line-height:24px;color:#212529;transform:scaleX(0.9343)">2021 January 30</div>
<div class="t" style="left:1756.89px;top:778px;font-size:24px;line-height:24px;color:#212529;transform:scaleX(0.9903)">English</div>
<div class="t" style="left:1903.90px;top:778px;font-size:24px;line-height:24px;color:#212529">2</div>
<div class="t" style="left:2101.80px;top:778px;font-size:24px;line-height:24px;color:#007bff;transform:scaleX(0.9442)">510 kB</div>
<div class="t" style="left:2200.92px;top:778px;font-size:24px;line-height:24px;color:#212529;transform:scaleX(0.9790)">pdf</div>
<div class="t" style="left:1560.38px;top:959px;font-size:24px;line-height:24px;color:#212529;transform:scaleX(0.9240)">2007 July</div>
<div class="t" style="left:1756.89px;top:959px;font-size:24px;line-height:24px;color:#212529;transform:scaleX(0.9903)">English</div>
<div class="t" style="left:1903.90px;top:959px;font-size:24px;line-height:24px;color:#212529">0</div>
<div class="t" style="left:2102.80px;top:959px;font-size:24px;line-height:24px;color:#007bff;transform:scaleX(0.9308)">449 kB</div>
<div class="t" style="left:2200.92px;top:959px;font-size:24px;line-height:24px;color:#212529;transform:scaleX(0.9790)">pdf</div>
<div class="t" style="left:1560.35px;top:1067px;font-size:24px;line-height:24px;color:#212529;transform:scaleX(0.9479)">2015 May 1</div>
<div class="t" style="left:1756.89px;top:1067px;font-size:24px;line-height:24px;color:#212529;transform:scaleX(0.9903)">English</div>
<div class="t" style="left:1903.90px;top:1067px;font-size:24px;line-height:24px;color:#212529">0</div>
<div class="t" style="left:2101.86px;top:1067px;font-size:24px;line-height:24px;color:#007bff;transform:scaleX(0.9407)">1 MB</div>
<div class="t" style="left:2200.92px;top:1067px;font-size:24px;line-height:24px;color:#212529;transform:scaleX(0.9790)">pdf</div>
<div class="t" style="left:1560.36px;top:1213px;font-size:24px;line-height:24px;color:#212529;transform:scaleX(0.9420)">2017 February 22</div>
<div class="t" style="left:1756.89px;top:1213px;font-size:24px;line-height:24px;color:#212529;transform:scaleX(0.9903)">English</div>
<div class="t" style="left:1903.90px;top:1213px;font-size:24px;line-height:24px;color:#212529">0</div>
<div class="t" style="left:2101.86px;top:1213px;font-size:24px;line-height:24px;color:#007bff;transform:scaleX(0.9407)">1 MB</div>
<div class="t" style="left:2200.92px;top:1213px;font-size:24px;line-height:24px;color:#212529;transform:scaleX(0.9790)">pdf</div>
<div class="bd" style="left:78.00px;top:365.50px;width:86.60px;height:27.40px;background:#007bff"><span style="left:6.52px;top:4.50px;font-size:19px;line-height:19px;transform:scaleX(0.9755)">1256931</span></div>
<div class="bd" style="left:542.80px;top:365.50px;width:87.00px;height:27.40px;background:#007bff"><span style="left:6.51px;top:4.50px;font-size:19px;line-height:19px;transform:scaleX(0.9945)">1671939</span></div>
<div class="bd" style="left:749.40px;top:365.50px;width:55.30px;height:27.40px;background:#007bff"><span style="left:6.51px;top:4.50px;font-size:19px;line-height:19px;transform:scaleX(0.9902)">1317</span></div>
<div class="bd" style="left:945.30px;top:365.50px;width:23.50px;height:27.40px;background:#007bff"><span style="left:6.75px;top:4.50px;font-size:19px;line-height:19px">0</span></div>
<div class="bd" style="left:1133.40px;top:365.50px;width:24.40px;height:27.40px;background:#007bff"><span style="left:7.20px;top:4.50px;font-size:19px;line-height:19px">0</span></div>
<div class="bd" style="left:1281.30px;top:365.50px;width:34.30px;height:27.40px;background:#007bff"><span style="left:7.50px;top:4.50px;font-size:19px;line-height:19px;transform:scaleX(0.8949)">84</span></div>
<div class="bd" style="left:424.70px;top:632.20px;width:22.90px;height:26.50px;background:#007bff"><span style="left:5.95px;top:3.75px;font-size:19px;line-height:19px">a</span></div>
<div class="bd" style="left:453.60px;top:632.20px;width:97.40px;height:26.50px;background:#6c757d"><span style="left:7.50px;top:3.75px;font-size:19px;line-height:19px;transform:scaleX(0.9233)">a 5193330</span></div>
<div class="bd" style="left:424.70px;top:741.00px;width:22.90px;height:26.50px;background:#007bff"><span style="left:5.95px;top:3.75px;font-size:19px;line-height:19px">a</span></div>
<div class="bd" style="left:453.60px;top:741.00px;width:97.40px;height:26.50px;background:#6c757d"><span style="left:7.50px;top:3.75px;font-size:19px;line-height:19px;transform:scaleX(0.9233)">a 5193330</span></div>
<div class="bd" style="left:348.70px;top:922.00px;width:23.10px;height:26.50px;background:#007bff"><span style="left:6.05px;top:3.75px;font-size:19px;line-height:19px">a</span></div>
<div class="bd" style="left:379.00px;top:922.00px;width:105.70px;height:26.50px;background:#6c757d"><span style="left:7.50px;top:3.75px;font-size:19px;line-height:19px;transform:scaleX(0.8997)">a 90448845</span></div>
<div class="bd" style="left:332.00px;top:1031.00px;width:23.90px;height:26.50px;background:#007bff"><span style="left:6.45px;top:3.75px;font-size:19px;line-height:19px">a</span></div>
<div class="bd" style="left:362.00px;top:1031.00px;width:106.80px;height:26.50px;background:#6c757d"><span style="left:7.50px;top:3.75px;font-size:19px;line-height:19px;transform:scaleX(0.9197)">a 13259383</span></div>
<div class="bd" style="left:310.20px;top:1176.30px;width:22.30px;height:26.50px;background:#007bff"><span style="left:5.65px;top:3.75px;font-size:19px;line-height:19px">a</span></div>
<div class="bd" style="left:339.20px;top:1176.30px;width:106.50px;height:26.50px;background:#6c757d"><span style="left:7.50px;top:3.75px;font-size:19px;line-height:19px;transform:scaleX(0.9167)">a 43901812</span></div>
<div class="bd" style="left:2297.00px;top:560.50px;width:67.00px;height:27.00px;background:#007bff"><span style="left:6.64px;top:3.55px;font-size:19px;line-height:19px;transform:scaleX(0.8572)">Libgen</span></div>
<div class="bd" style="left:2371.00px;top:560.50px;width:74.00px;height:27.00px;background:#007bff"><span style="left:7.50px;top:3.55px;font-size:19px;line-height:19px;transform:scaleX(0.8290)">Sci-Hub</span></div>
<div class="bd" style="left:2297.00px;top:596.50px;width:115.00px;height:27.00px;background:#007bff"><span style="left:6.67px;top:3.55px;font-size:19px;line-height:19px;transform:scaleX(0.8277)">Randombook</span></div>
<div class="bd" style="left:2419.00px;top:596.50px;width:89.00px;height:27.00px;background:#007bff"><span style="left:6.65px;top:3.55px;font-size:19px;line-height:19px;transform:scaleX(0.8523)">libgen.pw</span></div>
<div class="bd" style="left:2297.00px;top:625.70px;width:102.00px;height:27.00px;background:#007bff"><span style="left:7.50px;top:3.55px;font-size:19px;line-height:19px;transform:scaleX(0.8101)">Anna&#x27;s arch</span></div>
<div class="bd" style="left:2297.00px;top:669.00px;width:67.00px;height:27.00px;background:#007bff"><span style="left:6.64px;top:3.55px;font-size:19px;line-height:19px;transform:scaleX(0.8572)">Libgen</span></div>
<div class="bd" style="left:2371.00px;top:669.00px;width:74.00px;height:27.00px;background:#007bff"><span style="left:7.50px;top:3.55px;font-size:19px;line-height:19px;transform:scaleX(0.8290)">Sci-Hub</span></div>
<div class="bd" style="left:2297.00px;top:705.00px;width:115.00px;height:27.00px;background:#007bff"><span style="left:6.67px;top:3.55px;font-size:19px;line-height:19px;transform:scaleX(0.8277)">Randombook</span></div>
<div class="bd" style="left:2419.00px;top:705.00px;width:89.00px;height:27.00px;background:#007bff"><span style="left:6.65px;top:3.55px;font-size:19px;line-height:19px;transform:scaleX(0.8523)">libgen.pw</span></div>
<div class="bd" style="left:2297.00px;top:734.20px;width:102.00px;height:27.00px;background:#007bff"><span style="left:7.50px;top:3.55px;font-size:19px;line-height:19px;transform:scaleX(0.8101)">Anna&#x27;s arch</span></div>
<div class="bd" style="left:2297.00px;top:777.80px;width:67.00px;height:27.00px;background:#007bff"><span style="left:6.64px;top:3.55px;font-size:19px;line-height:19px;transform:scaleX(0.8572)">Libgen</span></div>
<div class="bd" style="left:2371.00px;top:777.80px;width:74.00px;height:27.00px;background:#007bff"><span style="left:7.50px;top:3.55px;font-size:19px;line-height:19px;transform:scaleX(0.8290)">Sci-Hub</span></div>
<div class="bd" style="left:2297.00px;top:813.80px;width:115.00px;height:27.00px;background:#007bff"><span style="left:6.67px;top:3.55px;font-size:19px;line-height:19px;transform:scaleX(0.8277)">Randombook</span></div>
<div class="bd" style="left:2419.00px;top:813.80px;width:89.00px;height:27.00px;background:#007bff"><span style="left:6.65px;top:3.55px;font-size:19px;line-height:19px;transform:scaleX(0.8523)">libgen.pw</span></div>
<div class="bd" style="left:2297.00px;top:843.00px;width:102.00px;height:27.00px;background:#007bff"><span style="left:7.50px;top:3.55px;font-size:19px;line-height:19px;transform:scaleX(0.8101)">Anna&#x27;s arch</span></div>
<div class="bd" style="left:2297.00px;top:958.90px;width:67.00px;height:27.00px;background:#007bff"><span style="left:6.64px;top:3.55px;font-size:19px;line-height:19px;transform:scaleX(0.8572)">Libgen</span></div>
<div class="bd" style="left:2371.00px;top:958.90px;width:74.00px;height:27.00px;background:#007bff"><span style="left:7.50px;top:3.55px;font-size:19px;line-height:19px;transform:scaleX(0.8290)">Sci-Hub</span></div>
<div class="bd" style="left:2297.00px;top:994.90px;width:115.00px;height:27.00px;background:#007bff"><span style="left:6.67px;top:3.55px;font-size:19px;line-height:19px;transform:scaleX(0.8277)">Randombook</span></div>
<div class="bd" style="left:2419.00px;top:994.90px;width:89.00px;height:27.00px;background:#007bff"><span style="left:6.65px;top:3.55px;font-size:19px;line-height:19px;transform:scaleX(0.8523)">libgen.pw</span></div>
<div class="bd" style="left:2297.00px;top:1024.10px;width:102.00px;height:27.00px;background:#007bff"><span style="left:7.50px;top:3.55px;font-size:19px;line-height:19px;transform:scaleX(0.8101)">Anna&#x27;s arch</span></div>
<div class="bd" style="left:2297.00px;top:1067.70px;width:67.00px;height:27.00px;background:#007bff"><span style="left:6.64px;top:3.55px;font-size:19px;line-height:19px;transform:scaleX(0.8572)">Libgen</span></div>
<div class="bd" style="left:2371.00px;top:1067.70px;width:74.00px;height:27.00px;background:#007bff"><span style="left:7.50px;top:3.55px;font-size:19px;line-height:19px;transform:scaleX(0.8290)">Sci-Hub</span></div>
<div class="bd" style="left:2297.00px;top:1103.70px;width:115.00px;height:27.00px;background:#007bff"><span style="left:6.67px;top:3.55px;font-size:19px;line-height:19px;transform:scaleX(0.8277)">Randombook</span></div>
<div class="bd" style="left:2419.00px;top:1103.70px;width:89.00px;height:27.00px;background:#007bff"><span style="left:6.65px;top:3.55px;font-size:19px;line-height:19px;transform:scaleX(0.8523)">libgen.pw</span></div>
<div class="bd" style="left:2297.00px;top:1132.90px;width:102.00px;height:27.00px;background:#007bff"><span style="left:7.50px;top:3.55px;font-size:19px;line-height:19px;transform:scaleX(0.8101)">Anna&#x27;s arch</span></div>
<div class="bd" style="left:2297.00px;top:1213.00px;width:67.00px;height:27.00px;background:#007bff"><span style="left:6.64px;top:3.55px;font-size:19px;line-height:19px;transform:scaleX(0.8572)">Libgen</span></div>
<div class="bd" style="left:2371.00px;top:1213.00px;width:74.00px;height:27.00px;background:#007bff"><span style="left:7.50px;top:3.55px;font-size:19px;line-height:19px;transform:scaleX(0.8290)">Sci-Hub</span></div>
<div class="bd" style="left:2297.00px;top:1249.00px;width:115.00px;height:27.00px;background:#007bff"><span style="left:6.67px;top:3.55px;font-size:19px;line-height:19px;transform:scaleX(0.8277)">Randombook</span></div>
<div class="bd" style="left:2419.00px;top:1249.00px;width:89.00px;height:27.00px;background:#007bff"><span style="left:6.65px;top:3.55px;font-size:19px;line-height:19px;transform:scaleX(0.8523)">libgen.pw</span></div>
<div class="bd" style="left:2297.00px;top:1278.20px;width:102.00px;height:27.00px;background:#007bff"><span style="left:7.50px;top:3.55px;font-size:19px;line-height:19px;transform:scaleX(0.8101)">Anna&#x27;s arch</span></div>
<!-- scrollbar -->
<div style="position:absolute;left:2538px;top:1px;width:22px;height:1310px;background:#fafafa"></div>
<svg style="position:absolute;left:2541px;top:6px" width="17" height="13" viewBox="0 0 17 13"><path d="M2 11.5 L8.5 2 L15 11.5Z" fill="#8b8b8b" stroke="#8b8b8b" stroke-width="1.5" stroke-linejoin="round"/></svg>
<div style="position:absolute;left:2543px;top:28px;width:13px;height:418px;border-radius:6.5px;background:#8b8b8b"></div>
</body></html>
